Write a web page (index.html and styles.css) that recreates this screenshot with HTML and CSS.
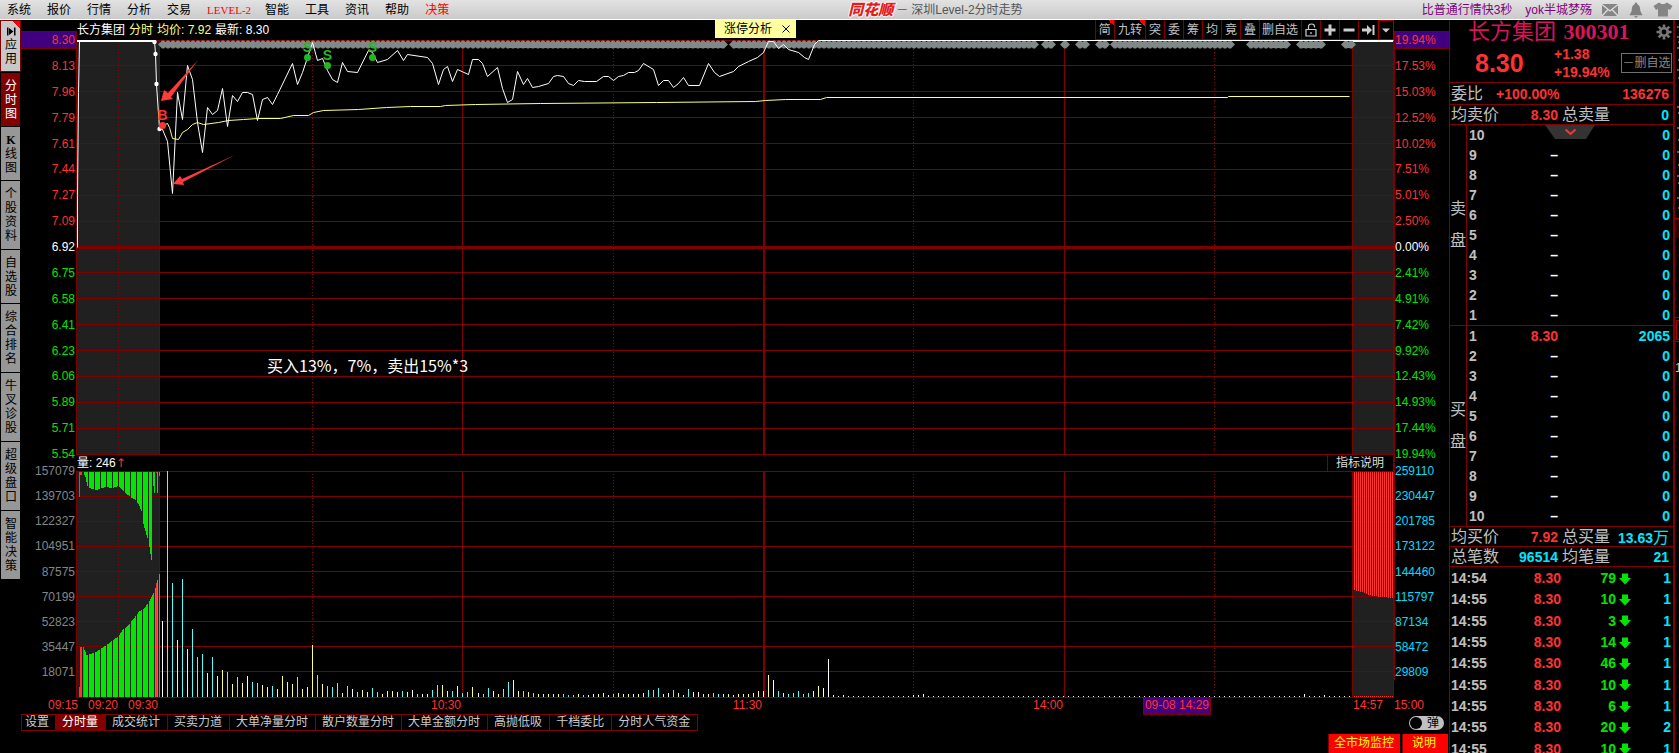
FILE: index.html
```html
<!DOCTYPE html>
<html lang="zh-CN">
<head>
<meta charset="utf-8">
<title>同花顺 - 深圳Level-2分时走势</title>
<link rel="stylesheet" href="styles.css">
</head>
<body>
<header class="topbar">
  <nav class="menu">
    <a href="#">系统</a><a href="#">报价</a><a href="#">行情</a><a href="#">分析</a><a href="#">交易</a><a href="#" class="hot latin">LEVEL-2</a><a href="#">智能</a><a href="#">工具</a><a href="#">资讯</a><a href="#">帮助</a><a href="#" class="hot">决策</a>
  </nav>
  <div class="app-title"><span class="logo">同花顺</span><span>－</span><span>深圳Level-2分时走势</span></div>
  <div class="account">
    <a href="#">比普通行情快3秒</a>
    <a href="#">yok半城梦殇</a>
    <button aria-label="消息"><svg width="18" height="14" viewBox="0 0 18 14"><rect x="1" y="1" width="16" height="12" fill="#858585"/><path d="M1 1.500L9 8L17 1.500M1 13L7 6.500M17 13L11 6.500" fill="none" stroke="#ddd" stroke-width="1.300"/></svg></button>
    <button aria-label="提醒"><svg width="16" height="16" viewBox="0 0 16 16"><path d="M8 0.500C9 0.500 9.300 1.500 9.300 2.300C12 3.500 12 6 12.300 8.500C12.500 10.500 14 11.500 14.500 13.300H1.500C2 11.500 3.500 10.500 3.700 8.500C4 6 4 3.500 6.700 2.300C6.700 1.500 7 0.500 8 0.500Z" fill="#808080"/><path d="M6 14h4l-2 2z" fill="#808080"/></svg></button>
    <button aria-label="换肤"><svg width="20" height="15" viewBox="0 0 20 15"><path d="M6 0.500Q10 4 14 0.500L19.500 4L17 8L15 7V14.500H5V7L3 8L0.500 4Z" fill="#858585"/></svg></button>
  </div>
</header>

<div class="workspace">
  <nav class="rail">
    <button class="apps"><svg width="9" height="9" viewBox="0 0 9 9"><path d="M0 0.500H1.500V8.500H0ZM2 1L6.500 4.500L2 8ZM7 0.500H8.500V8.500H7Z" fill="#000"/></svg>应用</button>
    <button class="active">分时图</button>
    <button><b>K</b>线图</button>
    <button>个股资料</button>
    <button>自选股</button>
    <button>综合排名</button>
    <button>牛叉诊股</button>
    <button>超级盘口</button>
    <button>智能决策</button>
  </nav>

  <main class="chart">
    <div class="plots">
      <div class="head">
        <div class="legend"><span>长方集团</span><span class="yellow">分时</span><span class="yellow">均价: 7.92</span><span>最新: 8.30</span></div>
        <div class="tip"><span>涨停分析</span><button aria-label="关闭"><svg width="8" height="8" viewBox="0 0 8 8"><path d="M0.500 0.500L7.500 7.500M7.500 0.500L0.500 7.500" stroke="#000" fill="none"/></svg></button></div>
        <div class="tools">
          <button class="new">简</button><button class="new">九转</button><button>突</button><button>委</button><button>筹</button><button>均</button><button>竟</button><button>叠</button><button>删自选</button>
          <button aria-label="锁定"><svg width="12" height="14" viewBox="0 0 12 14"><path d="M1 6.500H11V13H1ZM3.500 6V3.500Q3.500 1 6.500 1Q9.500 1 9.500 3.500V4.500M6 9V11" fill="none" stroke="#ccc" stroke-width="1.200"/></svg></button>
          <button aria-label="放大"><svg width="12" height="12" viewBox="0 0 12 12"><path d="M6 0.500V11.500M0.500 6H11.500" stroke="#ccc" stroke-width="3"/></svg></button>
          <button aria-label="缩小"><svg width="12" height="12" viewBox="0 0 12 12"><path d="M0.500 6H11.500" stroke="#ccc" stroke-width="3"/></svg></button>
          <button aria-label="移至最新"><svg width="13" height="12" viewBox="0 0 13 12"><path d="M0 4.500H5V1L10 6L5 11V7.500H0ZM10.500 1H12.500V11H10.500Z" fill="#ccc"/></svg></button>
          <button class="more" aria-label="更多"><svg width="8" height="5" viewBox="0 0 8 5"><path d="M0 0.500H8L4 4.500Z" fill="#ccc"/></svg></button>
        </div>
      </div>

      <div class="axis left price" id="price-left"></div>
      <div class="plot price-plot">
        <svg id="price" viewBox="76 40 1318 415" preserveAspectRatio="none"></svg>
        <p class="note">买入13%，7%，卖出15%*3</p>
      </div>
      <div class="axis right price" id="price-right"></div>

      <div class="strip"><span>量: 246<i>↑</i></span><button>指标说明</button></div>

      <div class="axis left vol" id="vol-left"></div>
      <div class="plot"><svg id="volume" viewBox="76 471 1318 227" preserveAspectRatio="none"></svg></div>
      <div class="axis right vol" id="vol-right"></div>

      <div class="times">
        <span>09:15</span><span>09:20</span><span>09:30</span><span>10:30</span><span>11:30</span><span>14:00</span><span class="cursor">09-08 14:29</span><span></span><span class="start">14:57</span><span class="start">15:00</span>
      </div>
    </div>

    <div class="foot">
      <div class="tabs">
        <button class="setup">设置</button><button class="active">分时量</button><button>成交统计</button><button>买卖力道</button><button>大单净量分时</button><button>散户数量分时</button><button>大单金额分时</button><button>高抛低吸</button><button>千档委比</button><button>分时人气资金</button>
      </div>
      <label class="switch"><input type="checkbox"><span>弹</span></label>
    </div>
    <div class="actions"><button>全市场监控</button><button class="short">说明</button></div>
  </main>

  <aside class="quote">
    <div class="summary">
      <h1>长方集团 <b>300301</b></h1>
      <button class="gear" aria-label="设置"><svg width="16" height="16" viewBox="-8 -8 16 16"><g stroke="#777" stroke-width="2.600"><path d="M0 -7.500V7.500M-7.500 0H7.500M-5.300 -5.300L5.300 5.300M5.300 -5.300L-5.300 5.300"/></g><circle r="5" fill="#777"/><circle r="2.400" fill="#000"/></svg></button>
      <strong class="last">8.30</strong>
      <div class="change"><span>+1.38</span><span>+19.94%</span></div>
      <button class="remove">－删自选</button>
    </div>
    <div class="line ratio"><span>委比</span><b class="red">+100.00%</b><b class="red end">136276</b></div>
    <div class="line"><span>均卖价</span><b class="red mid">8.30</b><span>总卖量</span><b class="cyan end">0</b></div>
    <div class="book">
      <div class="side">卖盘</div>
      <table id="asks"></table>
      <button class="fold" aria-label="收起"><svg width="50" height="14" viewBox="0 0 50 14"><path d="M0 0H50L41 14H10Z" fill="#333"/><path d="M20.500 4.500L25.500 9L30.500 4.500" fill="none" stroke="#ff3232" stroke-width="2"/></svg></button>
    </div>
    <div class="book">
      <div class="side">买盘</div>
      <table id="bids"></table>
    </div>
    <div class="line"><span>均买价</span><b class="red mid">7.92</b><span>总买量</span><b class="cyan end">13.63<em>万</em></b></div>
    <div class="line"><span>总笔数</span><b class="cyan mid">96514</b><span>均笔量</span><b class="cyan end">21</b></div>
    <table class="trades" id="trades"></table>
  </aside>
  <div class="edge">
    <svg width="4" height="340" viewBox="0 0 4 340"><path d="M2 7h2M2 17h2M3 22h1M2 28h2M3 40h1M2 50h2M3 58h1M2 87h2M3 93h1M2 108h2M3 120h1M2 132h2M3 145h1M2 156h2M3 163h1M2 178h2M3 188h1" stroke="#bbb"/><path d="M0 199H4V218H0Z" fill="#300000"/><path d="M0 198.500H4M0 297.500H4M4 300.500H1.500V319.500H4M0 321.500H4" stroke="#a00000" fill="none"/></svg>
    <span>1</span>
  </div>
</div>
<script src="chart.js"></script>
</body>
</html>
```
FILE: styles.css
```css
* { box-sizing: border-box; }
body {
  margin: 0;
  height: 100vh;
  display: flex;
  flex-direction: column;
  overflow: hidden;
  background: #000;
  color: #c0c0c0;
  font: 12px/16px "Liberation Sans", "Noto Sans CJK SC", sans-serif;
}
button {
  margin: 0;
  padding: 0;
  border: 0;
  background: none;
  color: inherit;
  font: inherit;
}
a { color: inherit; text-decoration: none; }
svg { display: block; }
table { border-collapse: collapse; }
td { padding: 0; }
.red { color: #ff3232; }
.cyan { color: #00e6ff; }
.yellow { color: #ffff80; }

.topbar {
  flex: none;
  height: 20px;
  display: flex;
  align-items: center;
  padding: 0 6px 0 7px;
  background: linear-gradient(#e2e2e2, #cacaca);
  border-bottom: 1px solid #fff;
  color: #000;
  white-space: nowrap;
}
.menu { display: flex; gap: 16px; }
.menu .hot { color: #f00; }
.menu .latin { font-family: "Liberation Serif", serif; font-size: 11px; margin-right: -2px; }
.app-title { display: flex; align-items: center; gap: 3px; margin: 0 auto; color: #555; }
.logo {
  color: #e02020;
  font-size: 15px;
  font-weight: 900;
  font-style: italic;
  text-shadow: 1px 0 #fff, -1px 0 #fff, 0 1px #fff, 0 -1px #fff;
}
.account { display: flex; align-items: center; gap: 9px; color: #800080; }
.account a + a { margin: 0 0 0 4px; }

.workspace {
  flex: 1;
  min-height: 0;
  display: grid;
  grid-template-columns: 21px minmax(0, 1fr) 226px 4px;
}

.rail { display: flex; flex-direction: column; gap: 1px; padding: 1px 1px 0; }
.rail button {
  width: 19px;
  padding: 6px 3px 6px 4px;
  background: #979797;
  color: #000;
  line-height: 14px;
  word-break: break-all;
}
.rail button:nth-child(2), .rail button:nth-child(3), .rail button:nth-child(5) { padding-bottom: 5px; }
.rail b { font-family: "Liberation Serif", serif; display: block; }
.rail .apps {
  margin-bottom: 1px;
  padding: 6px 3px 5px 4px;
  outline: 1px solid #800000;
  background: linear-gradient(45deg, transparent 50%, #f00 50%) top right / 8px 8px no-repeat, #c8c8c8;
}
.rail .apps svg { margin: 0 auto 2px; }
.rail .active { background: #800000; color: #fff; }

.chart { display: flex; flex-direction: column; min-width: 0; min-height: 0; }
.plots {
  flex: 1;
  min-height: 0;
  display: grid;
  grid-template-columns: 55px minmax(0, 1fr) 55px;
  grid-template-rows: 20px minmax(0, 415fr) 16px minmax(0, 227fr) 16px;
}
.head {
  grid-column: 2;
  display: flex;
  align-items: flex-start;
  white-space: nowrap;
}
.legend { flex: 638 1 0; display: flex; gap: 4px; padding: 2px 0 0 1px; color: #fff; }
.tip {
  display: flex;
  align-items: center;
  gap: 10px;
  height: 18px;
  padding: 0 6px 0 9px;
  background: #ffffa0;
  color: #000;
}
.tools { flex: 598 1 0; display: flex; justify-content: flex-end; height: 20px; }
.tools button {
  display: flex;
  align-items: center;
  justify-content: center;
  padding: 0 3px;
  min-width: 19px;
  border-left: 1px solid #800000;
  border-bottom: 1px solid #800000;
}
.tools button:nth-child(9) { padding: 0 2px; }
.tools button:nth-child(2), .tools button:nth-child(9) { padding-right: 3px; }
.tools .new { background: linear-gradient(45deg, transparent 50%, #f00 50%) top right / 6px 6px no-repeat; }
.tools .more { min-width: 15px; border: 1px solid #a00000; }

.axis { display: flex; flex-direction: column; justify-content: space-between; }
.axis.left { grid-column: 1; text-align: right; }
.axis.right { grid-column: 3; border-left: 1px solid #800000; }
.axis span { display: block; height: 16px; padding: 0 1px 0 0; }
.axis.price { margin: -8px 0 -7px; z-index: 1; }
.axis.vol { margin: -8px 0 18px; }
.axis .up { color: #ff3232; }
.axis .flat { color: #fff; }
.axis .down { color: #00e600; }
.axis .mark { background: #400080; outline: 1px solid #800000; }
.axis.left.vol { color: #808888; }
.axis.right.vol { color: #00dcff; }
.plot { position: relative; grid-column: 2; min-height: 0; }
.plot svg { width: 100%; height: 100%; }
.note {
  position: absolute;
  left: 14.5%;
  top: 75.8%;
  margin: 0;
  color: #fff;
  font: 16px/20px "Noto Sans CJK SC", sans-serif;
  white-space: nowrap;
}
.strip {
  grid-column: 2;
  display: flex;
  justify-content: space-between;
  padding-left: 1px;
  color: #fff;
}
.strip i { color: #ff3232; font-style: normal; font-family: "DejaVu Sans", sans-serif; }
.strip button {
  padding: 0 9px 0 8px;
  border: solid #800000;
  border-width: 0 1px 0 1px;
  color: #ddd;
  line-height: 16px;
}
.times {
  grid-column: 1 / -1;
  display: grid;
  grid-template-columns: 57px 40fr 40fr 303fr 301fr 301fr 147fr 143fr 41fr 55px;
  color: #ff3232;
  line-height: 14px;
  text-align: right;
  white-space: nowrap;
}
.times .start { text-align: left; }
.times .cursor { justify-self: end; padding: 0 1px; background: #400080; outline: 1px solid #800000; }

.foot { display: flex; justify-content: space-between; }
.tabs { display: flex; white-space: nowrap; }
.tabs button {
  height: 17px;
  padding: 0 7px 0 6px;
  border: 1px solid #800000;
  border-right: 0;
  color: #ccc;
  line-height: 15px;
}
.tabs .setup { padding: 0 6px 0 3px; }
.tabs .active { background: #800000; color: #fff; }
.tabs button:last-child { border-right: 1px solid #800000; }
.switch {
  display: flex;
  align-items: center;
  width: 35px;
  height: 14px;
  margin: 2px 5px 0 0;
  padding: 0 5px 0 1px;
  justify-content: space-between;
  border-radius: 7px;
  background: #c0c0c0;
  color: #000;
  line-height: 14px;
}
.switch input { appearance: none; width: 12px; height: 12px; margin: 0; border-radius: 6px; background: #000; }
.actions { display: flex; justify-content: flex-end; gap: 2px; padding: 3px 1px 0 0; }
.actions button { padding: 1px 6px 2px 5px; height: 19px; border-left: 1px solid #800000; background: #f00; color: #ff0; }
.actions .short { padding: 1px 12px 2px 9px; }

.quote {
  border: solid #800000;
  border-width: 0 2px 0 1px;
  overflow: hidden;
  font-size: 14px;
  font-weight: bold;
}
.quote span { font-size: 16px; font-weight: normal; }
.summary {
  display: grid;
  grid-template-columns: 104px 1fr auto;
  grid-template-rows: 24px 38px;
  align-items: center;
  height: 63px;
  padding-right: 1px;
  border-bottom: 1px solid #800000;
}
.summary h1 {
  grid-column: 1 / 3;
  margin: 0;
  padding-left: 18px;
  color: #d8145c;
  font: 22px/24px "Liberation Serif", "Noto Sans CJK SC", serif;
  white-space: nowrap;
}
.summary h1 b { margin-left: 2px; }
.summary .gear { justify-self: end; }
.last { padding-left: 25px; color: #ff3232; font-size: 25px; }
.change { display: grid; gap: 2px; }
.quote .change span { color: #ff3232; font-size: 14px; font-weight: bold; }
.remove {
  height: 20px;
  width: 51px;
  border: 1px solid #707070;
  color: #888;
  font-size: 12px;
  font-weight: normal;
  white-space: nowrap;
}
.line {
  display: flex;
  align-items: center;
  height: 20px;
  padding: 0 4px 0 1px;
  border-bottom: 1px solid #800000;
  white-space: nowrap;
}
.ratio { height: 22px; gap: 13px; }
.line .mid { width: 60px; padding-right: 1px; margin-right: 3px; text-align: right; }
.line .end { margin-left: auto; }
.line em { font: 16px/18px "Noto Sans CJK SC", sans-serif; }
.book { position: relative; display: flex; border-bottom: 1px solid #800000; }
.side {
  width: 17px;
  display: flex;
  align-items: center;
  border-right: 1px solid #800000;
  font-size: 16px;
  font-weight: normal;
  line-height: 32px;
  word-break: break-all;
}
.book table { flex: 1; }
.book td { height: 20px; line-height: 20px; }
.book td:nth-child(1) { padding-left: 2px; width: 30px; }
.book td:nth-child(2) { width: 61px; text-align: right; color: #fff; }
.book td:nth-child(3) { padding-right: 3px; text-align: right; color: #00e6ff; }
.book td.red { color: #ff3232; }
.fold { position: absolute; left: 95px; top: 0; }
.trades { width: 100%; margin-top: 1px; }
.trades td { height: 21px; line-height: 21px; text-align: right; }
.trades tr:nth-child(3n) td { height: 22px; }
.trades td:nth-child(1) { padding-left: 1px; text-align: left; }
.trades td:nth-child(2) { width: 60px; }
.trades td:nth-child(3) { width: 55px; color: #00e600; }
.trades td:nth-child(4) { width: 15px; padding-left: 3px; }
.trades td:nth-child(5) { width: 42px; padding-right: 2px; }
.edge { overflow: hidden; line-height: 16px; }
```
FILE: chart.js
```js
const byId = id => document.getElementById(id);

function axis(id, labels, cls) {
  byId(id).innerHTML = labels.map((t, i) => `<span class="${cls ? cls(i) : ''}">${t}</span>`).join('');
}
const tone = i => (i === 0 ? 'mark up' : i < 8 ? 'up' : i === 8 ? 'flat' : 'down');
axis('price-left', '8.30 8.13 7.96 7.79 7.61 7.44 7.27 7.09 6.92 6.75 6.58 6.41 6.23 6.06 5.89 5.71 5.54'.split(' '), tone);
axis('price-right', '19.94 17.53 15.03 12.52 10.02 7.51 5.01 2.50 0.00 2.41 4.91 7.42 9.92 12.43 14.93 17.44 19.94'.split(' ').map(v => v + '%'), tone);
axis('vol-left', '157079 139703 122327 104951 87575 70199 52823 35447 18071'.split(' '));
axis('vol-right', '259110 230447 201785 173122 144460 115797 87134 58472 29809'.split(' '));

const rect = (x, y, w, h, fill) => `<rect x="${x}" y="${y}" width="${w}" height="${h}" fill="${fill}"/>`;
const GRID = '#800000';

function frame(top, bottom, rows) {
  const h = bottom - top;
  let s = rect(77, top, 82, h, '#202020') + rect(1353, top, 40, h, '#202020');
  rows.forEach(y => { s += rect(76, y, 1318, 1, GRID); });
  [76, 159, 462, 1064, 1352, 1393].forEach(x => { s += rect(x, top, 1, h, GRID); });
  s += rect(763, top, 2, h, GRID);
  [118, 312, 613, 913, 1214].forEach(x => {
    s += `<path d="M${x + 0.5} ${top}V${bottom}" stroke="#900000" stroke-dasharray="1 2"/>`;
  });
  return s;
}

/* price pane */
let p = frame(40, 455, [40, 65, 91, 117, 143, 169, 195, 221, 272, 298, 324, 350, 376, 402, 428, 454]);
p += rect(76, 246, 1318, 3, GRID);

let diamonds = '';
[[158, 727], [729, 1038], [1041, 1058], [1060, 1069], [1075, 1089], [1095, 1109],
 [1110, 1234], [1246, 1290], [1296, 1329], [1341, 1355]].forEach(([a, b]) => {
  for (let x = a + 5; x <= b - 4; x += 5) diamonds += `M${x - 5} 44.5L${x - 1} 40.5H${x + 1}L${x + 5} 44.5L${x + 1} 48.5H${x - 1}Z`;
});
p += `<path d="${diamonds}" fill="#808888"/>`;

const line = (pts, color, w = 1) =>
  `<polyline points="${pts}" transform="translate(.5 .5)" fill="none" stroke="${color}" stroke-width="${w}"/>`;

p += line('159,128 162,125 167,123 169,127 172,138 178,139 182,132 187,129 192,124 197,122 203,124 218,122 228,120 243,119 258,118 280,118 293,115 308,115 313,112 323,110 358,109 386,107 410,106 440,106 445,105 475,104 540,103 656,102 755,101 765,100 785,99 820,99 826,97 1227,97 1228,96 1349,96', '#ffff80');
p += line('79,41 78,92 77,195 77,247', '#fff');
p += rect(77, 40, 78, 2, '#fff') + rect(1353, 40, 40, 2, '#fff');
p += line('154,41 155,53 156,84 159,128 162,129 167,141 172,193 177,92 182,119 187,65 192,79 197,122 202,152 207,107 212,114 217,110 222,88 227,126 232,95 237,101 242,92 247,92 252,94 257,120 262,99 267,97 272,104 277,94 292,63 297,84 302,72 307,57 312,42 317,60 322,58 327,70 332,79 337,82 342,62 347,71 357,72 368,50 372,52 377,62 387,59 397,50 403,60 407,54 427,57 432,63 438,84 443,69 447,66 452,81 457,69 468,74 472,59 478,59 482,63 487,76 497,67 502,88 507,102 512,99 517,71 523,84 527,78 532,87 538,86 548,83 553,76 557,75 563,76 568,83 573,85 578,80 584,81 596,81 603,76 608,76 613,80 618,76 623,75 628,72 634,72 638,70 643,63 653,69 658,85 663,80 668,80 673,87 678,83 683,77 688,85 699,85 708,63 714,72 719,76 733,71 738,66 748,61 757,57 763,52 768,41 773,41 778,48 783,44 788,49 798,52 804,57 808,59 814,44 818,40 1393,40', '#fff');
[[154, 42], [155, 54], [156, 84], [159, 129]].forEach(([x, y]) => { p += `<circle cx="${x + 0.5}" cy="${y}" r="2.2" fill="#fff"/>`; });

const signal = (x, y, t, c) =>
  `<circle cx="${x}" cy="${y}" r="3.5" fill="${c}"/><text x="${x}" y="${y - 6}" fill="${c}" text-anchor="middle" font-family="Liberation Sans" font-weight="bold" font-size="14">${t}</text>`;
p += signal(307.5, 57.5, 'S', '#22b822') + signal(327.5, 65.5, 'S', '#22b822') + signal(372.5, 57.5, 'S', '#22b822');
p += signal(162.5, 125.5, 'B', '#ff3232');
p += '<path d="M161 101L164 90L168 93L198 60L171 97L173 99ZM173 184L180 176L182 179L235 155L183 182L184 185Z" fill="#ff3b3b"/>';
byId('price').innerHTML = p;

/* volume pane */
let v = frame(471, 698, [471, 496, 521, 546, 571, 596, 621, 646, 671, 697]);

function at(points, x) {
  for (let i = 1; i < points.length; i++) {
    const [x0, y0] = points[i - 1], [x1, y1] = points[i];
    if (x <= x1) return Math.round(y0 + (y1 - y0) * (x - x0) / (x1 - x0));
  }
  return points[points.length - 1][1];
}
const matched = [[83, 647], [86, 655], [89, 654], [94, 653], [100, 649], [106, 645], [113, 640], [118, 636], [122, 630], [127, 626], [133, 619], [139, 611], [143, 609], [148, 603], [153, 593], [155, 588], [157, 580]];
const unmatched = [[83, 472], [85, 477], [87, 486], [89, 488], [96, 490], [105, 487], [112, 488], [115, 487], [118, 486], [121, 489], [125, 493], [130, 497], [135, 500], [138, 504], [141, 511], [143, 524], [146, 535], [148, 541], [151, 560]];
for (let x = 83; x <= 157; x++) {
  if ((x - 88) % 6 === 0) continue;
  v += rect(x, at(matched, x), 1, 697 - at(matched, x), '#00e600');
  if (x <= 151) v += rect(x, 472, 1, at(unmatched, x) - 472, '#00e600');
}
v += rect(159, 574, 1, 123, '#00e600') + rect(156, 583, 1, 114, '#ff3232');
v += rect(79, 687, 1, 10, '#ff3232') + rect(80, 647, 2, 50, '#ff3232') + rect(83, 647, 1, 50, '#ff3232');
v += rect(79, 472, 1, 25, '#ff3232') + rect(80, 472, 2, 3, '#ff3232') + rect(156, 472, 1, 1, '#ff3232');
v += rect(153, 472, 1, 14, '#00e600') + rect(154, 472, 1, 21, '#00e600') + rect(157, 472, 1, 21, '#00e600') + rect(159, 472, 1, 4, '#00e600');

const COLORS = { w: '#fff', c: '#54fcfc', y: '#ffff80' };
const bars = ('w76 c226 c114 y57 c118 y48 c68 c40 c43 y24 c40 y21 y27 c25 y13 c20 y14 w21 c15 c14 y12 y10 c11 y8 y21 y15 y13 c20 y8 y10 ' +
  'y52 c22 y13 c11 c10 c14 y4 c11 w8 c5 y7 y5 c9 c5 y3 y6 y6 y5 c6 y5 w7 c3 w3 w3 c7 c12 y12 y6 c6 y11 ' +
  'c4 c5 y10 w4 c3 c9 y6 y3 c8 c15 y17 y6 c6 y5 c4 y3 y3 y3 y3 y3 c3 c2 c2 y3 c2 w2 w3 y3 y4 w2 ' +
  'c3 y4 w3 y3 w3 y3 y4 c7 c7 c9 y3 w4 c7 y4 y2 c8 w5 w5 y3 y3 c4 c3 y3 y3 y2 y3 y3 y3 y4 y6 ' +
  'y6 y22 w17 c6 y4 c3 c4 c6 c3 c4 y6 y11 w9 w38 w2 w1 w2').split(' ');
const late = { 150: 2, 151: 2, 152: 3, 228: 3, 232: 2 };
for (let k = bars.length; k < 238; k++) bars.push('w' + (late[k] || 1));
bars.forEach((b, k) => {
  const h = Number(b.slice(1));
  v += rect(Math.round(162 + k * 5.008), 697 - h, 1, h, COLORS[b[0]]);
});
for (let x = 1354; x < 1393; x += 2) {
  v += rect(x, 472, 1, at([[1354, 118], [1364, 121], [1372, 124], [1392, 126]], x), '#ff3232') + rect(x, 696, 1, 1, '#ff3232');
}
byId('volume').innerHTML = v;

/* order book and trades */
const row = (n, price, vol) => `<tr><td>${n}</td><td class="${price ? 'red' : ''}">${price || '–'}</td><td>${vol}</td></tr>`;
const levels = [1, 2, 3, 4, 5, 6, 7, 8, 9, 10];
byId('asks').innerHTML = [...levels].reverse().map(n => n === 10 ? '<tr><td>10</td><td></td><td>0</td></tr>' : row(n, '', 0)).join('');
byId('bids').innerHTML = levels.map(n => n === 1 ? row(1, '8.30', 2065) : row(n, '', 0)).join('');

const arrow = '<svg width="12" height="12" viewBox="0 0 12 12"><path d="M3 0.500H9V5H12L6 11.500L0 5H3Z" fill="#00e600"/></svg>';
byId('trades').innerHTML = [['14:54', 79, 1], ['14:55', 10, 1], ['14:55', 3, 1], ['14:55', 14, 1], ['14:55', 46, 1], ['14:55', 10, 1], ['14:55', 6, 1], ['14:55', 20, 2], ['14:55', 10, 1]]
  .map(([t, n, c]) => `<tr><td>${t}</td><td class="red">8.30</td><td>${n}</td><td>${arrow}</td><td class="cyan">${c}</td></tr>`).join('');
```
